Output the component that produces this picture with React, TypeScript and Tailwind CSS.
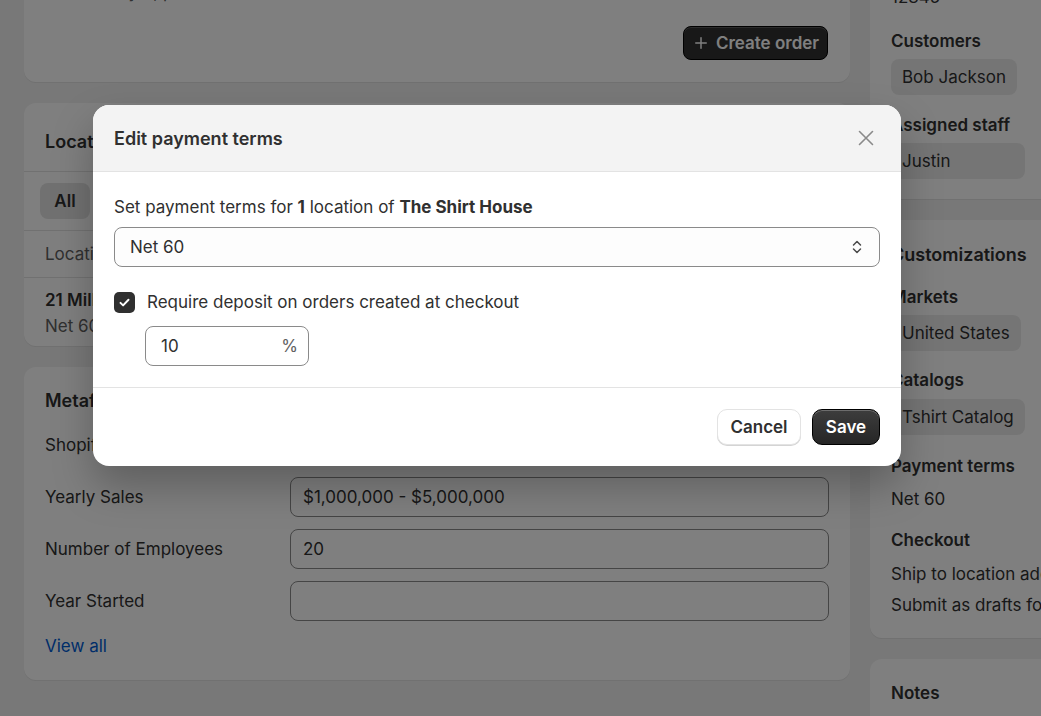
import { Plus } from 'lucide-react';

const card = 'bg-white rounded-xl shadow-[0_1px_0_0_rgba(26,26,26,0.07)]';
const chip = 'h-9 flex items-center px-[11px] rounded-lg bg-[#ebebeb] text-[#303030]';

function MetaRow({ label, value }: { label: string; value: string }) {
  return (
    <div className="flex items-center">
      <div className="w-[245px] shrink-0">{label}</div>
      <div className="flex-1 h-10 flex items-center px-3 rounded-lg border border-[#8a8a8a] bg-white">{value}</div>
    </div>
  );
}

function CheckIcon() {
  return (
    <svg width="13" height="13" viewBox="0 0 12 12" fill="none">
      <path d="M2.3 6.3l2.4 2.4 5-5.2" stroke="white" strokeWidth="1.8" strokeLinecap="round" strokeLinejoin="round" />
    </svg>
  );
}

function SelectChevrons() {
  return (
    <svg width="12" height="20" viewBox="0 0 12 20" fill="none">
      <path d="M2.5 8l3.5-3.5L9.5 8" stroke="#4a4a4a" strokeWidth="1.5" strokeLinecap="round" strokeLinejoin="round" />
      <path d="M2.5 12l3.5 3.5L9.5 12" stroke="#4a4a4a" strokeWidth="1.5" strokeLinecap="round" strokeLinejoin="round" />
    </svg>
  );
}

function CloseIcon() {
  return (
    <svg width="16" height="16" viewBox="0 0 16 16" fill="none">
      <path d="M1.5 1.5l13 13M14.5 1.5l-13 13" stroke="#8a8a8a" strokeWidth="1.6" strokeLinecap="round" />
    </svg>
  );
}

export default function App() {
  return (
    <div className="relative h-[716px] w-[1041px] overflow-hidden bg-[#f1f1f1] font-[family-name:Inter,sans-serif] text-[17px] leading-6 text-[#303030]">
      {/* Page behind the modal */}
      <div className="flex gap-5 pl-6">
        {/* Main column */}
        <div className="w-[826px] shrink-0 flex flex-col gap-[21px] -mt-[40px]">
          <div className={`${card} pl-5 pr-[22px] pt-5 pb-[22px]`}>
            <div className="text-[#616161]">No orders yet, place one for this location</div>
            <div className="flex justify-end mt-[22px]">
              <button className="h-[34px] w-[145px] flex items-center justify-center gap-1.5 rounded-lg bg-[#303030] text-white font-semibold border border-black shadow-[inset_0_1px_0_rgba(255,255,255,0.2)]">
                <Plus size={18} strokeWidth={2} />
                Create order
              </button>
            </div>
          </div>

          <div className={`${card} overflow-hidden`}>
            <div className="h-[69px] px-[21px] pt-[27px] border-b border-[#e3e3e3] text-[18px] font-semibold">Locations</div>
            <div className="px-4 py-[11px] border-b border-[#e3e3e3] flex">
              <div className="h-9 w-[50px] flex items-center justify-center rounded-lg bg-[#e3e3e3] font-semibold">All</div>
            </div>
            <div className="h-[47px] px-[21px] flex items-center border-b border-[#e3e3e3] text-[#616161]">Location</div>
            <div className="px-[21px] pt-[10px] pb-[8px] flex flex-col gap-[2px]">
              <div className="font-semibold">21 Mill Street, Toronto</div>
              <div className="text-[#616161]">Net 60</div>
            </div>
          </div>

          <div className={`${card} px-[21px] pt-[22px] pb-[22px] flex flex-col gap-3`}>
            <div className="text-[18px] font-semibold">Metafields</div>
            <MetaRow label="Shopify ID" value="" />
            <MetaRow label="Yearly Sales" value="$1,000,000 - $5,000,000" />
            <MetaRow label="Number of Employees" value="20" />
            <MetaRow label="Year Started" value="" />
            <div className="text-[#005bd3] mt-[1px]">View all</div>
          </div>
        </div>

        {/* Sidebar */}
        <div className="w-[300px] shrink-0 flex flex-col gap-[21px] -mt-[36px]">
          <div className={`${card} px-[21px] pt-[21px] pb-5 flex flex-col`}>
            <div>12345</div>
            <div className="mt-5 font-semibold">Customers</div>
            <div className="mt-1.5 flex"><div className={chip}>Bob Jackson</div></div>
            <div className="mt-[18px] font-semibold">Assigned staff</div>
            <div className="mt-1.5 flex"><div className={`${chip} w-[134px]`}>Justin</div></div>
          </div>

          <div className={`${card} px-[21px] pt-[23px] pb-[21px] flex flex-col`}>
            <div className="text-[18px] font-semibold">Customizations</div>
            <div className="mt-[18px] font-semibold">Markets</div>
            <div className="mt-1.5 flex"><div className={chip}>United States</div></div>
            <div className="mt-[17px] font-semibold">Catalogs</div>
            <div className="mt-[7px] flex"><div className={chip}>Tshirt Catalog</div></div>
            <div className="mt-[19px] font-semibold">Payment terms</div>
            <div className="mt-[9px]">Net 60</div>
            <div className="mt-[17px] font-semibold">Checkout</div>
            <div className="mt-[10px] whitespace-nowrap">Ship to location address only</div>
            <div className="mt-[7px] whitespace-nowrap">Submit as drafts for review</div>
          </div>

          <div className={`${card} px-[21px] pt-[22px] pb-6`}>
            <div className="font-semibold">Notes</div>
            <div className="mt-2 text-[#616161]">No notes</div>
          </div>
        </div>
      </div>

      {/* Overlay */}
      <div className="absolute inset-0 bg-black/50" />

      {/* Modal */}
      <div className="absolute left-[93px] top-[105px] w-[808px] rounded-2xl bg-white overflow-hidden shadow-[0_20px_40px_rgba(0,0,0,0.25)]">
        <div className="h-[67px] px-[21px] flex items-center justify-between bg-[#f3f3f3] border-b border-[#e3e3e3]">
          <h2 className="text-[18px] font-semibold mt-[2px]">Edit payment terms</h2>
          <button className="w-7 h-7 flex items-center justify-center">
            <CloseIcon />
          </button>
        </div>

        <div className="px-[21px] pt-[23px] pb-[21px] border-b border-[#e3e3e3]">
          <p>
            Set payment terms for <span className="font-bold">1</span> location of <span className="font-bold">The Shirt House</span>
          </p>
          <div className="mt-2 h-10 flex items-center justify-between pl-[15px] pr-4 rounded-lg border border-[#8a8a8a] bg-[#fdfdfd]">
            <span>Net 60</span>
            <SelectChevrons />
          </div>
          <div className="mt-[23px] flex items-center gap-3">
            <span className="w-[21px] h-[21px] rounded-[5px] bg-[#303030] flex items-center justify-center">
              <CheckIcon />
            </span>
            <span>Require deposit on orders created at checkout</span>
          </div>
          <div className="mt-[12px] ml-[31px] w-[164px] h-10 flex items-center justify-between pl-[15px] pr-[10px] rounded-lg border border-[#8a8a8a] bg-white">
            <span>10</span>
            <span className="text-[#616161]">%</span>
          </div>
        </div>

        <div className="px-[21px] pt-[21px] pb-[21px] flex justify-end gap-[11px]">
          <button className="h-9 w-[84px] rounded-[10px] bg-white border border-[#e3e3e3] shadow-[0_1px_0_#d4d4d4] font-semibold">Cancel</button>
          <button className="h-9 w-[68px] rounded-[10px] bg-gradient-to-b from-[#3d3d3d] to-[#262626] border border-black text-white font-semibold shadow-[inset_0_1px_0_rgba(255,255,255,0.25)]">Save</button>
        </div>
      </div>
    </div>
  );
}
